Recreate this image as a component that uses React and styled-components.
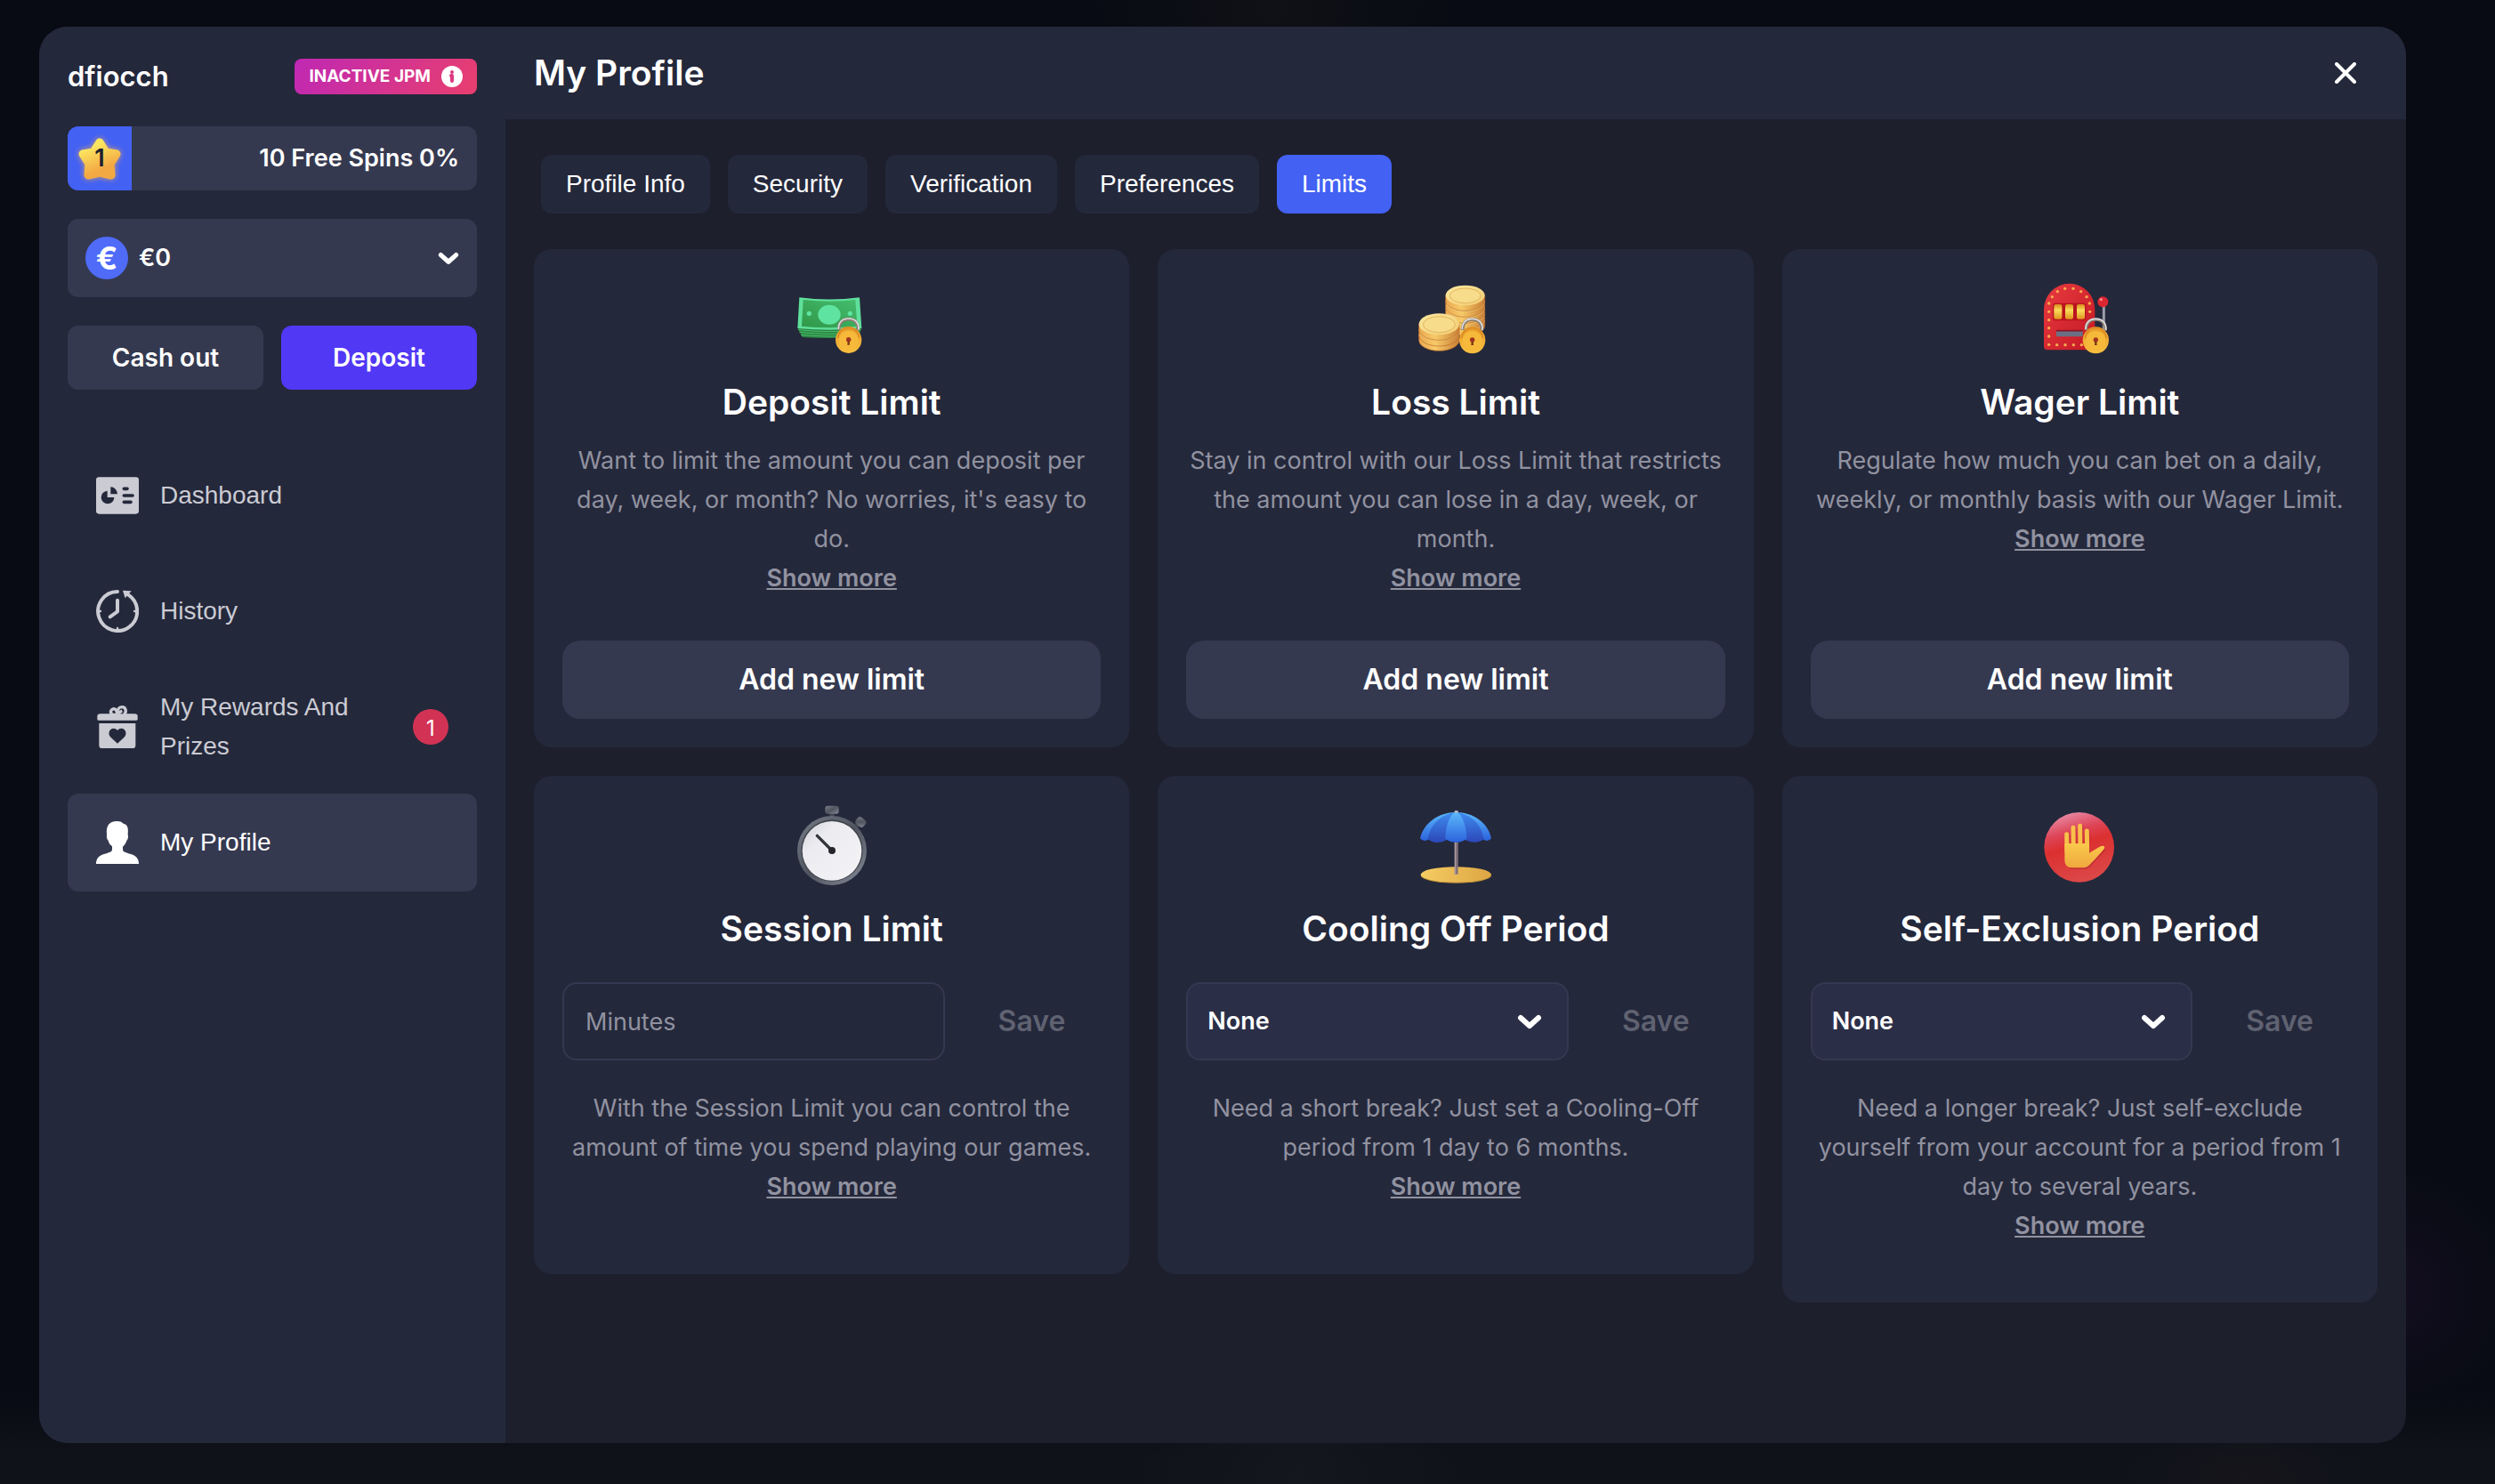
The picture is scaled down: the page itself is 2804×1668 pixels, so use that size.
import React, { useState } from "react";
import styled, { createGlobalStyle, css } from "styled-components";

const GlobalStyle = createGlobalStyle`
  * {
    box-sizing: border-box;
  }

  body {
    margin: 0;
    background: #080b13;
    color: #fff;
    font-family: Inter, "Liberation Sans", sans-serif;
    font-size: 27px;
    line-height: 44px;
  }

  button,
  input,
  select {
    font: inherit;
    color: inherit;
  }
`;

const Page = styled.div`
  display: flex;
  min-height: 100vh;
  padding: 30px 100px 46px 44px;
  background:
    radial-gradient(circle at 96% 87%, #1b0f2899 0, #1b0f2800 140px),
    radial-gradient(ellipse at 90% 100%, #17151c 0, #17151c00 140px),
    radial-gradient(ellipse at 52% 100%, #15171e 0, #15171e00 180px),
    radial-gradient(ellipse at 51% 0, #101116 0, #10111600 200px),
    linear-gradient(#080b1300 94%, #0f1219 98%);
`;

const Modal = styled.div`
  display: flex;
  flex: 1;
  border-radius: 32px;
  overflow: hidden;
  background: #1d1f2d;
`;

const Sidebar = styled.aside`
  display: flex;
  flex-direction: column;
  gap: 32px;
  width: 524px;
  flex-shrink: 0;
  padding: 32px;
  background: #24283b;
`;

const UserRow = styled.div`
  display: flex;
  align-items: center;
  justify-content: space-between;
  height: 48px;
`;

const UserName = styled.span`
  font-size: 31px;
  font-weight: 600;
`;

const JpmBadge = styled.button`
  display: flex;
  align-items: center;
  gap: 12px;
  height: 40px;
  padding: 0 16px;
  border: none;
  border-radius: 8px;
  background: linear-gradient(120deg, #bf28b4, #e83f6e);
  font-size: 19px;
  font-weight: 700;
  cursor: pointer;
`;

const LevelBar = styled.div`
  display: flex;
  align-items: center;
  justify-content: space-between;
  height: 72px;
  padding-right: 20px;
  border-radius: 12px;
  overflow: hidden;
  background: #353950;
  font-weight: 600;
`;

const LevelStar = styled.div`
  display: grid;
  place-items: center;
  width: 72px;
  height: 72px;
  background: #4361f3;
  color: #1d1f2d;

  > * {
    grid-area: 1 / 1;
  }
`;

const Wallet = styled.button`
  display: flex;
  align-items: center;
  gap: 12px;
  height: 88px;
  padding: 0 20px;
  border: none;
  border-radius: 12px;
  background: #353950;
  font-weight: 600;
  cursor: pointer;
`;

const Currency = styled.span`
  display: grid;
  place-items: center;
  width: 48px;
  height: 48px;
  border-radius: 50%;
  background: #4f6bf8;
  font-size: 36px;
  font-weight: 700;
`;

const Balance = styled.span`
  flex: 1;
  text-align: left;
`;

const WalletActions = styled.div`
  display: grid;
  grid-template-columns: 1fr 1fr;
  gap: 20px;
`;

const WalletButton = styled.button`
  height: 72px;
  border: none;
  border-radius: 12px;
  background: ${({ $primary }) => ($primary ? "#5138f5" : "#353950")};
  font-size: 28px;
  font-weight: 600;
  cursor: pointer;
`;

const Nav = styled.nav`
  display: flex;
  flex-direction: column;
  gap: 20px;
  margin-top: 32px;
`;

const NavItem = styled.a`
  display: flex;
  align-items: center;
  gap: 24px;
  height: 110px;
  padding: 0 32px;
  border-radius: 12px;
  color: #cbcbd3;
  font-family: "Liberation Sans", Arial, sans-serif;
  font-size: 28px;
  text-decoration: none;

  ${({ $active }) =>
    $active &&
    css`
      background: #353950;
      color: #fff;
    `}
`;

const NavLabel = styled.span`
  flex: 1;
`;

const NavCount = styled.span`
  display: grid;
  place-items: center;
  width: 40px;
  height: 40px;
  border-radius: 50%;
  background: #d23354;
  color: #fff;
  font-family: Inter, sans-serif;
  font-size: 24px;
`;

const Main = styled.main`
  flex: 1;
  min-width: 0;
`;

const Header = styled.header`
  display: flex;
  align-items: center;
  justify-content: space-between;
  height: 104px;
  padding: 0 32px;
  background: #24283b;
`;

const PageTitle = styled.h1`
  margin: 0;
  font-size: 39px;
  font-weight: 600;
`;

const CloseButton = styled.button`
  display: grid;
  place-items: center;
  width: 72px;
  height: 72px;
  padding: 0;
  border: none;
  background: none;
  cursor: pointer;
`;

const Tabs = styled.div`
  display: flex;
  gap: 20px;
  padding: 40px;
`;

const Tab = styled.button`
  height: 66px;
  padding: 0 28px;
  border: none;
  border-radius: 12px;
  background: ${({ $active }) => ($active ? "#4361f3" : "#24283b")};
  font-family: "Liberation Sans", Arial, sans-serif;
  font-size: 28px;
  cursor: pointer;
`;

const Cards = styled.div`
  display: grid;
  grid-template-columns: repeat(3, minmax(0, 1fr));
  align-items: start;
  gap: 32px;
  padding: 0 32px 32px;
`;

const Card = styled.section`
  display: flex;
  flex-direction: column;
  align-items: center;
  min-height: 560px;
  padding: 32px;
  padding-bottom: ${({ $withForm }) => ($withForm ? "64px" : "32px")};
  border-radius: 20px;
  background: #24283b;
  text-align: center;
`;

const CardTitle = styled.h2`
  margin: 12px 0;
  font-size: 39px;
  font-weight: 600;
  line-height: 64px;
`;

const Description = styled.p`
  margin: 0;
  color: #9192a0;
`;

const ShowMore = styled.button`
  padding: 0;
  border: none;
  background: none;
  color: #9192a0;
  font-weight: 600;
  text-decoration: underline;
  cursor: pointer;
`;

const AddButton = styled.button`
  width: 100%;
  height: 88px;
  margin-top: auto;
  border: none;
  border-radius: 20px;
  background: #353950;
  font-size: 32px;
  font-weight: 600;
  cursor: pointer;
`;

const FormRow = styled.form`
  display: flex;
  gap: 20px;
  width: 100%;
  margin: 16px 0 32px;
`;

const MinutesInput = styled.input`
  flex: 1;
  min-width: 0;
  height: 88px;
  padding: 0 24px;
  border: 2px solid #343850;
  border-radius: 16px;
  background: #24283b;

  &::placeholder {
    color: #9192a0;
    opacity: 1;
  }
`;

const SelectBox = styled.div`
  display: grid;
  flex: 1;
  align-items: center;

  > * {
    grid-area: 1 / 1;
  }

  svg {
    justify-self: end;
    margin-right: 30px;
    pointer-events: none;
  }
`;

const Select = styled.select`
  appearance: none;
  width: 100%;
  height: 88px;
  padding: 0 22px;
  border: 2px solid #343850;
  border-radius: 16px;
  background: #2a2e47;
  font-weight: 600;
`;

const SaveButton = styled.button`
  height: 88px;
  padding: 0 40px;
  border: none;
  background: none;
  color: #5f6271;
  font-size: 32px;
  font-weight: 600;
`;

const HiddenSvg = styled.svg`
  position: absolute;
  width: 0;
  height: 0;
`;

const Chevron = ({ size = 28 }) => (
  <svg width={size} height={size} viewBox="0 0 28 28" fill="none">
    <path d="M4 10L14 19L24 10" stroke="#fff" strokeWidth="6" strokeLinecap="round" strokeLinejoin="round" />
  </svg>
);

const InfoIcon = () => (
  <svg width="24" height="24" viewBox="0 0 24 24">
    <circle cx="12" cy="12" r="12" fill="#fff" />
    <circle cx="12" cy="7" r="2" fill="#dc3a80" />
    <path d="M11 11h1v6" stroke="#dc3a80" strokeWidth="4" fill="none" strokeLinecap="round" strokeLinejoin="round" />
  </svg>
);

const CloseIcon = () => (
  <svg width="24" height="24" viewBox="0 0 24 24">
    <path d="M2 2L22 22M22 2L2 22" stroke="#fff" strokeWidth="4" strokeLinecap="round" />
  </svg>
);

const starPath = "M32 14L39 25L51 27L44 38L45 51L32 48L19 51L20 38L13 27L25 25Z";

const StarIcon = () => (
  <svg width="64" height="64" viewBox="0 0 64 64">
    <defs>
      <linearGradient id="star" x1="0" y1="0" x2="0.4" y2="1">
        <stop offset="0.2" stopColor="#fbe660" />
        <stop offset="0.9" stopColor="#f3a943" />
      </linearGradient>
      <filter id="starGlow" x="-30%" y="-30%" width="160%" height="160%">
        <feGaussianBlur stdDeviation="3" />
      </filter>
    </defs>
    <g strokeWidth="9" strokeLinejoin="round">
      <path d={starPath} fill="#f5b04a" stroke="#f5b04a" filter="url(#starGlow)" opacity="0.8" />
      <path d={starPath} fill="url(#star)" stroke="url(#star)" />
    </g>
  </svg>
);

const DashboardIcon = () => (
  <svg width="48" height="48" viewBox="0 0 144 144">
    <rect y="10" width="144" height="124" rx="10" fill="currentColor" />
    <path d="M38 56V78H61A22 22 0 1 1 38 56Z" fill="#24283b" />
    <path d="M49 43V67H72A23 24 0 0 0 49 43Z" fill="#24283b" />
    <path d="M94 49H105M94 72H123M94 94H117" stroke="#24283b" strokeWidth="11" strokeLinecap="round" />
  </svg>
);

const HistoryIcon = () => (
  <svg width="48" height="48" viewBox="0 0 144 144" fill="none" stroke="currentColor" strokeLinecap="round">
    <path d="M72 6A66 66 0 1 0 109 17" strokeWidth="12" />
    <path d="M72 35V73L47 91" strokeWidth="12" strokeLinejoin="round" />
    <path d="M8 72H15M129 72H136M72 129V136" strokeWidth="7" />
    <path d="M90 2L119 4L98 28Z" fill="currentColor" stroke="none" />
  </svg>
);

const RewardsIcon = () => (
  <svg width="48" height="48" viewBox="0 0 144 144" fill="currentColor">
    <g fill="none" stroke="currentColor" strokeWidth="10">
      <path d="M66 32C50 32 46 22 52 15C60 7 74 12 69 32" />
      <path d="M72 32C70 12 78 5 87 5C101 5 104 22 94 30" />
      <path d="M72 32C76 24 82 20 88 18" />
    </g>
    <path d="M4 36Q4 28 14 28H130Q140 28 140 36V46Q140 50 136 50H8Q4 50 4 46Z" />
    <path d="M10 60H133V134Q133 144 123 144H20Q10 144 10 134Z" />
    <path
      d="M72 128L48 106C38 94 46 77 58 77C66 77 70 80 72 84C74 80 78 77 86 77C98 77 106 94 96 106Z"
      fill="#24283b"
    />
  </svg>
);

const ProfileIcon = () => (
  <svg width="48" height="48" viewBox="0 0 144 144" fill="currentColor">
    <path d="M0 144C0 128 8 118 24 112C40 107 54 104 54 96V85C46 80 43 72 40 64C36 60 35 52 36 44C33 16 44 0 70 0C80 0 86 2 92 8C104 10 110 20 107 44C109 52 108 60 104 64C101 74 96 81 90 86V96C90 104 104 107 120 112C136 118 144 128 144 144Z" />
  </svg>
);

const Gradients = () => (
  <HiddenSvg aria-hidden="true">
    <defs>
      <linearGradient id="gold" x1="0" y1="0" x2="0" y2="1">
        <stop offset="0" stopColor="#e89a2a" />
        <stop offset="1" stopColor="#f8c040" />
      </linearGradient>
      <linearGradient id="coinSide" x1="0" y1="0" x2="1" y2="0">
        <stop offset="0" stopColor="#eba850" />
        <stop offset="0.4" stopColor="#f7ca68" />
        <stop offset="1" stopColor="#c97f35" />
      </linearGradient>
      <linearGradient id="coinTop" x1="0" y1="0" x2="1" y2="1">
        <stop offset="0" stopColor="#fbe9a0" />
        <stop offset="1" stopColor="#f1cb72" />
      </linearGradient>
      <linearGradient id="bill" x1="1" y1="0" x2="0" y2="1">
        <stop offset="0" stopColor="#45bd6e" />
        <stop offset="1" stopColor="#309748" />
      </linearGradient>
      <linearGradient id="reel" x1="0" y1="0" x2="0" y2="1">
        <stop offset="0" stopColor="#d98a1c" />
        <stop offset="0.4" stopColor="#f9dc5a" />
        <stop offset="1" stopColor="#e09420" />
      </linearGradient>
      <linearGradient id="slot" x1="0" y1="0" x2="1" y2="1">
        <stop offset="0" stopColor="#e83a40" />
        <stop offset="1" stopColor="#c31824" />
      </linearGradient>
      <linearGradient id="steel" x1="0" y1="0" x2="1" y2="1">
        <stop offset="0" stopColor="#777e89" />
        <stop offset="0.5" stopColor="#4f545e" />
        <stop offset="1" stopColor="#868d99" />
      </linearGradient>
      <linearGradient id="dial" x1="0" y1="0" x2="1" y2="1">
        <stop offset="0" stopColor="#cfd0d6" />
        <stop offset="0.3" stopColor="#ececf0" />
        <stop offset="1" stopColor="#f4f4f7" />
      </linearGradient>
      <linearGradient id="shade" x1="0" y1="0" x2="0" y2="1">
        <stop offset="0" stopColor="#5cb9fb" />
        <stop offset="1" stopColor="#2b62dd" />
      </linearGradient>
      <linearGradient id="shadeDark" x1="0" y1="0" x2="0" y2="1">
        <stop offset="0" stopColor="#3f8cf0" />
        <stop offset="1" stopColor="#2c47b8" />
      </linearGradient>
      <linearGradient id="sand" x1="0" y1="0" x2="1" y2="0">
        <stop offset="0" stopColor="#f5cd62" />
        <stop offset="1" stopColor="#dda544" />
      </linearGradient>
      <linearGradient id="stop" x1="0.2" y1="0" x2="0.5" y2="1">
        <stop offset="0" stopColor="#e995b0" />
        <stop offset="0.3" stopColor="#de4558" />
        <stop offset="0.5" stopColor="#dc3030" />
        <stop offset="1" stopColor="#dc4848" />
      </linearGradient>
      <linearGradient id="hand" x1="0" y1="0" x2="0" y2="1">
        <stop offset="0" stopColor="#fac94c" />
        <stop offset="1" stopColor="#efa83e" />
      </linearGradient>
    </defs>
  </HiddenSvg>
);

const Padlock = ({ x, y }) => (
  <g transform={`translate(${x} ${y})`}>
    <path d="M-32 -34C-34 -58 -20 -70 0 -70C22 -70 34 -56 32 -32" fill="none" stroke="#8b7d70" strokeWidth="11" />
    <path d="M-34 -36C-35 -60 -20 -72 0 -72C22 -72 36 -58 34 -34" fill="none" stroke="#dcdde0" strokeWidth="5" />
    <ellipse rx="44" ry="45" fill="url(#gold)" />
    <path d="M-35 -6A35 35 0 0 1 35 -6" fill="none" stroke="#d98620" strokeWidth="4" />
    <ellipse cy="2" rx="33" ry="33" fill="#f6b93a" />
    <circle cy="-1" r="8" fill="#a23220" />
    <path d="M-3 3H3L4 17H-4Z" fill="#7d3a14" />
  </g>
);

const BanknoteIcon = () => (
  <svg width="96" height="96" viewBox="80 36 288 288">
    <path d="M108 205L124 237Q215 243 312 237L324 205Z" fill="#2c8444" />
    <path d="M110 212Q215 224 322 212M114 220Q215 232 318 220M119 229Q215 239 314 229" stroke="#49bf6b" strokeWidth="3" fill="none" />
    <path d="M114 103Q215 116 317 103L324 207Q215 218 108 207Z" fill="#5fe09c" />
    <path d="M127 111Q215 121 303 111L309 200Q215 209 122 200Z" fill="url(#bill)" />
    <ellipse cx="215" cy="161" rx="38" ry="33" fill="#5fe3a0" />
    <circle cx="147" cy="157" r="8" fill="#5fe3a0" />
    <circle cx="285" cy="157" r="8" fill="#5fe3a0" />
    <Padlock x={280} y={246} />
  </svg>
);

const coinPath = (cx, cy, rx, ry, depth) =>
  `M${cx - rx} ${cy}V${cy + depth}A${rx} ${ry} 0 0 0 ${cx + rx} ${cy + depth}V${cy}Z`;

const Coin = ({ x, y, rx, ry }) => (
  <>
    <path d={coinPath(x, y, rx, ry, 18)} fill="url(#coinSide)" stroke="#b8692c" strokeWidth="2" />
    <ellipse cx={x} cy={y} rx={rx} ry={ry} fill="url(#coinTop)" />
    <ellipse cx={x} cy={y + 1} rx={rx - 14} ry={ry - 9} fill="#f7dc8b" stroke="#e3b65e" strokeWidth="3" />
  </>
);

const CoinsIcon = () => (
  <svg width="96" height="96" viewBox="84 36 288 288">
    {[180, 159, 138, 117, 96].map((y) => (
      <Coin key={y} x={260} y={y} rx={66} ry={34} />
    ))}
    {[229, 213, 193].map((y) => (
      <Coin key={y} x={172} y={y} rx={68} ry={36} />
    ))}
    <Padlock x={284} y={247} />
  </svg>
);

const bulbs = [
  [129, 262], [156, 263], [184, 263], [212, 263], [239, 263], [129, 234], [129, 206],
  [129, 179], [129, 151], [129, 123], [140, 101], [158, 83], [183, 73], [211, 73],
  [237, 83], [256, 101], [266, 123], [267, 151],
];

const SlotMachineIcon = () => (
  <svg width="96" height="96" viewBox="88 36 288 288">
    <path d="M314 125V240" stroke="#9a9da8" strokeWidth="9" />
    <circle cx="311" cy="118" r="18" fill="#dc2630" />
    <circle cx="305" cy="110" r="5" fill="#f38d90" />
    <path d="M112 144A86 88 0 0 1 284 144V280H124Q112 280 112 268Z" fill="url(#slot)" />
    {bulbs.map(([x, y]) => (
      <circle key={`${x}-${y}`} cx={x} cy={y} r="5" fill="#f8ac50" />
    ))}
    <rect x="142" y="122" width="112" height="59" rx="8" fill="#b9141f" />
    {[146, 184, 223].map((x) => (
      <rect key={x} x={x} y="126" width="27" height="50" rx="6" fill="url(#reel)" />
    ))}
    <rect x="154" y="213" width="89" height="22" rx="3" fill="#6b6f83" />
    <path d="M154 215H243" stroke="#8d1320" strokeWidth="5" />
    <Padlock x={287} y={247} />
  </svg>
);

const StopwatchIcon = () => (
  <svg width="96" height="96" viewBox="80 42 288 288">
    <path d="M224 65V90M305 115L317 103" stroke="#43474f" strokeWidth="16" />
    <rect x="201" y="47" width="46" height="27" rx="9" fill="url(#steel)" />
    <rect x="304" y="88" width="34" height="28" rx="10" fill="url(#steel)" transform="rotate(42 321 102)" />
    <circle cx="224" cy="198" r="117" fill="url(#steel)" />
    <circle cx="224" cy="198" r="104" fill="#3f434c" />
    <circle cx="224" cy="199" r="100" fill="url(#dial)" />
    <path d="M174 148L224 198" stroke="#33353c" strokeWidth="10" strokeLinecap="round" />
    <circle cx="224" cy="198" r="12" fill="#24262c" />
  </svg>
);

const UmbrellaIcon = () => (
  <svg width="96" height="96" viewBox="84 42 288 288">
    <ellipse cx="229" cy="282" rx="119" ry="26" fill="#b98e38" />
    <ellipse cx="229" cy="279" rx="119" ry="26" fill="url(#sand)" />
    <path d="M230 66V278" stroke="#85747d" strokeWidth="12" />
    <path d="M226 66V278" stroke="#b8a6ab" strokeWidth="3" />
    <path d="M108 157C120 105 170 69 229 69C288 69 338 105 348 157Q336 172 320 160L137 160Q120 172 108 157Z" fill="url(#shade)" />
    <path d="M229 69C175 76 142 112 134 160Q160 180 194 164C196 118 210 85 229 69Z" fill="url(#shadeDark)" />
    <path d="M229 69C283 76 316 112 323 160Q298 178 264 164C262 118 248 85 229 69Z" fill="url(#shadeDark)" />
    <path d="M229 69C210 70 193 116 193 160Q229 182 265 160C265 116 248 70 229 69Z" fill="url(#shade)" />
    <rect x="224" y="63" width="12" height="9" rx="3" fill="#a6b3c8" />
  </svg>
);

const StopHandIcon = () => (
  <svg width="96" height="96" viewBox="88 42 288 288">
    <circle cx="231" cy="187" r="118" fill="url(#stop)" />
    <g transform="translate(3 5)" stroke="#b52a2c" fill="#b52a2c" opacity="0.6">
      <path d="M190 144V200M211 121V200M235 115V200M257 132V200" strokeWidth="15" strokeLinecap="round" />
      <path d="M182 175H265V206L305 184Q318 180 316 192L272 240Q260 256 244 256H204Q182 252 182 230Z" stroke="none" />
    </g>
    <path d="M189 143L190 200M211 121L212 200M234 115L235 200M257 132L258 200" stroke="#f8c04a" strokeWidth="15" strokeLinecap="round" />
    <path d="M182 174H265V206L303 184Q319 179 316 191C300 210 284 228 272 240Q260 256 244 256H206Q182 254 182 230Z" fill="url(#hand)" />
  </svg>
);

const navItems = [
  { label: "Dashboard", icon: DashboardIcon },
  { label: "History", icon: HistoryIcon },
  { label: "My Rewards And Prizes", icon: RewardsIcon, count: 1 },
  { label: "My Profile", icon: ProfileIcon, active: true },
];

const tabs = ["Profile Info", "Security", "Verification", "Preferences", "Limits"];

const limits = [
  {
    title: "Deposit Limit",
    icon: BanknoteIcon,
    text: "Want to limit the amount you can deposit per day, week, or month? No worries, it's easy to do.",
  },
  {
    title: "Loss Limit",
    icon: CoinsIcon,
    text: "Stay in control with our Loss Limit that restricts the amount you can lose in a day, week, or month.",
  },
  {
    title: "Wager Limit",
    icon: SlotMachineIcon,
    text: "Regulate how much you can bet on a daily, weekly, or monthly basis with our Wager Limit.",
  },
];

const periods = [
  {
    title: "Session Limit",
    icon: StopwatchIcon,
    field: "minutes",
    text: "With the Session Limit you can control the amount of time you spend playing our games.",
  },
  {
    title: "Cooling Off Period",
    icon: UmbrellaIcon,
    field: "select",
    text: "Need a short break? Just set a Cooling-Off period from 1 day to 6 months.",
  },
  {
    title: "Self-Exclusion Period",
    icon: StopHandIcon,
    field: "select",
    text: "Need a longer break? Just self-exclude yourself from your account for a period from 1 day to several years.",
  },
];

const LimitCard = ({ title, icon: Icon, text }) => (
  <Card>
    <Icon />
    <CardTitle>{title}</CardTitle>
    <Description>{text}</Description>
    <ShowMore type="button">Show more</ShowMore>
    <AddButton type="button">Add new limit</AddButton>
  </Card>
);

const PeriodCard = ({ title, icon: Icon, text, field }) => (
  <Card $withForm>
    <Icon />
    <CardTitle>{title}</CardTitle>
    <FormRow onSubmit={(e) => e.preventDefault()}>
      {field === "minutes" ? (
        <MinutesInput aria-label={title} inputMode="numeric" placeholder="Minutes" />
      ) : (
        <SelectBox>
          <Select aria-label={title} defaultValue="None">
            <option>None</option>
          </Select>
          <Chevron />
        </SelectBox>
      )}
      <SaveButton disabled>Save</SaveButton>
    </FormRow>
    <Description>{text}</Description>
    <ShowMore type="button">Show more</ShowMore>
  </Card>
);

const App = () => {
  const [activeTab, setActiveTab] = useState("Limits");

  return (
    <Page>
      <GlobalStyle />
      <Gradients />
      <Modal role="dialog" aria-label="My Profile">
        <Sidebar>
          <UserRow>
            <UserName>dfiocch</UserName>
            <JpmBadge type="button">
              INACTIVE JPM
              <InfoIcon />
            </JpmBadge>
          </UserRow>
          <LevelBar>
            <LevelStar>
              <StarIcon />
              <span>1</span>
            </LevelStar>
            <span>10 Free Spins 0%</span>
          </LevelBar>
          <Wallet type="button">
            <Currency>€</Currency>
            <Balance>€0</Balance>
            <Chevron size={24} />
          </Wallet>
          <WalletActions>
            <WalletButton type="button">Cash out</WalletButton>
            <WalletButton type="button" $primary>
              Deposit
            </WalletButton>
          </WalletActions>
          <Nav>
            {navItems.map(({ label, icon: Icon, count, active }) => (
              <NavItem key={label} href="#" $active={active}>
                <Icon />
                <NavLabel>{label}</NavLabel>
                {count && <NavCount>{count}</NavCount>}
              </NavItem>
            ))}
          </Nav>
        </Sidebar>
        <Main>
          <Header>
            <PageTitle>My Profile</PageTitle>
            <CloseButton type="button" aria-label="Close">
              <CloseIcon />
            </CloseButton>
          </Header>
          <Tabs>
            {tabs.map((tab) => (
              <Tab key={tab} type="button" $active={tab === activeTab} onClick={() => setActiveTab(tab)}>
                {tab}
              </Tab>
            ))}
          </Tabs>
          <Cards>
            {limits.map((limit) => (
              <LimitCard key={limit.title} {...limit} />
            ))}
            {periods.map((period) => (
              <PeriodCard key={period.title} {...period} />
            ))}
          </Cards>
        </Main>
      </Modal>
    </Page>
  );
};

export default App;
